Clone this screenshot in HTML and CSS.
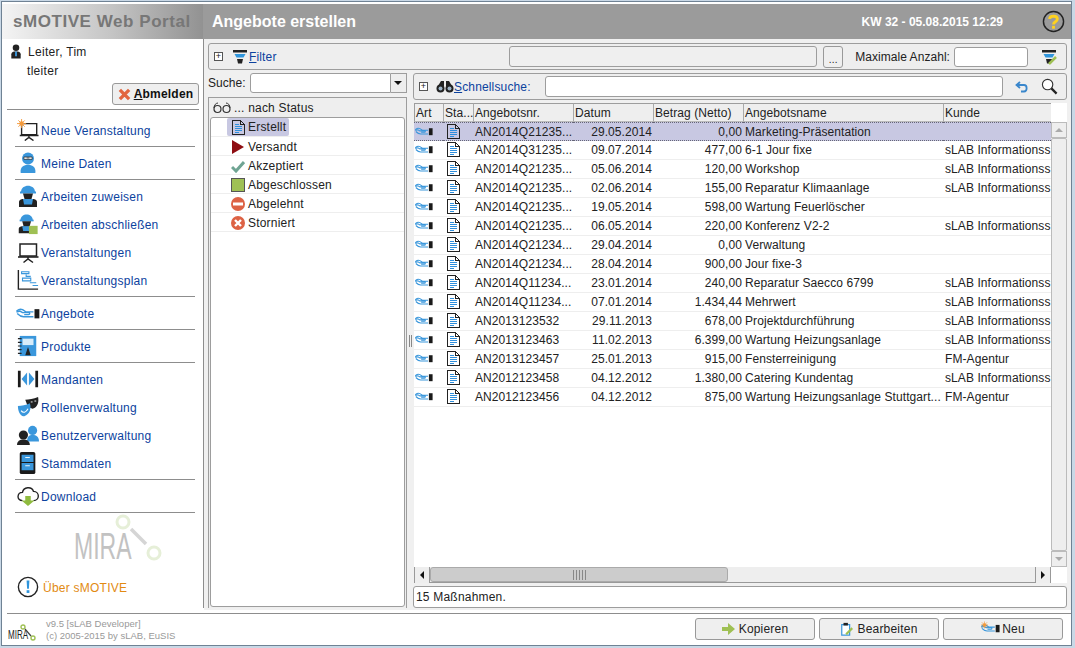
FILE: index.html
```html
<!DOCTYPE html>
<html lang="de">
<head>
<meta charset="utf-8">
<title>sMOTIVE Web Portal</title>
<link rel="stylesheet" href="styles.css">
</head>
<body>
<svg class="sprites" width="0" height="0">
  <defs>
    <symbol id="hand" viewBox="0 0 22 12">
      <path d="M16 4.500H9L6 2.500C4 1.500 2.500 2 .8 3.500L1 4.500 3.500 3.800 6 5.200H11.500C13 5.200 13 7 11.500 7H7.500M16 9H7C4.500 9 3 8 1 6" fill="none" stroke="#3a97dc" stroke-width="1.300"/>
      <rect x="17" y="2" width="4.500" height="8.500" fill="#1a1a1a"/>
    </symbol>
    <symbol id="doc" viewBox="0 0 13 15">
      <path d="M.5.5H8.500L12.500 4.500V14.500H.5Z" fill="none" stroke="#222"/>
      <path d="M8.500.5V4.500H12.500" fill="none" stroke="#222"/>
      <path d="M3 4.500H7M3 6.500H10M3 8.500H10M3 10.500H10M3 12.500H7" stroke="#2f8fdc"/>
    </symbol>
    <symbol id="board" viewBox="0 0 22 22">
      <path d="M3 3H19.500V15H3Z" fill="#fff" stroke="#222" stroke-width="1.500"/>
      <path d="M1 16H21.500" stroke="#222" stroke-width="1.600"/>
      <path d="M11 16V18M6.500 21.500 11 18 16 21.500" fill="none" stroke="#222" stroke-width="1.500"/>
    </symbol>
    <symbol id="worker" viewBox="0 0 22 24">
      <path d="M4 8C4 -.5 18 -.5 18 8Z" fill="#3a97dc"/>
      <rect x="3" y="7.500" width="16" height="2" fill="#3a97dc"/>
      <path d="M6 9.500H16L14.500 15H7.500Z" fill="#222"/>
      <path d="M2 23V18C2 15.500 5 15 7 15H15C17 15 20 15.500 20 18V23Z" fill="#222"/>
      <path d="M6 15H16L15 20.500H7Z" fill="#3a97dc"/>
    </symbol>
    <symbol id="funnel" viewBox="0 0 16 16">
      <path d="M1 1H15V3.500H1Z" fill="#222"/>
      <path d="M2.500 5H13.500L11.500 8.500H4.500Z" fill="#2f95dc"/>
      <path d="M5 10H11L10 14.500H6Z" fill="#222"/>
    </symbol>
  </defs>
</svg>

<div class="window">
  <div class="frame">
    <header class="topbar">
      <div class="brand">sMOTIVE Web Portal</div>
      <div class="titlebar">
        <h1 class="title">Angebote erstellen</h1>
        <div class="clock">KW 32 - 05.08.2015 12:29</div>
        <svg class="help" viewBox="0 0 24 24"><circle cx="12" cy="12" r="10.500" fill="none" stroke="#222" stroke-width="1.500"/><path d="M8 9.500C8 5.500 16 5.500 16 9.500 16 12.500 12 12 12 15" fill="none" stroke="#ffd21f" stroke-width="3"/><rect x="10.500" y="16.500" width="3" height="3" fill="#ffd21f"/></svg>
      </div>
    </header>

    <div class="body">
      <aside class="sidebar">
        <div class="user">
          <div class="user-line">
            <svg class="user-ic" viewBox="0 0 12 16"><circle cx="6" cy="4" r="3.500" fill="#222"/><path d="M1 15.500V11C1 8.500 3 8 6 8S11 8.500 11 11V15.500Z" fill="#222"/><path d="M5 8H7V13H5Z" fill="#3a97dc"/></svg>
            <span>Leiter, Tim</span>
          </div>
          <div class="user-login">tleiter</div>
          <div class="user-action">
            <button class="btn logout"><svg class="x-ic" viewBox="0 0 14 14"><path d="M2 2 12 12M12 2 2 12" stroke="#e2663f" stroke-width="3.600"/></svg><b><u>A</u>bmelden</b></button>
          </div>
        </div>

        <nav class="menu">
          <div class="group first">
            <a class="item"><span class="mi"><svg class="i24" viewBox="0 0 24 24"><use href="#board" x="2" y="2" width="22" height="22"/><circle cx="5" cy="5" r="2.500" fill="#f49a3c"/><path d="M5 0V10M0 5H10M1.500 1.500 8.500 8.500M8.500 1.500 1.500 8.500" stroke="#f49a3c"/></svg></span>Neue Veranstaltung</a>
          </div>
          <div class="group">
            <a class="item"><span class="mi"><svg class="i24" viewBox="0 0 24 24"><circle cx="12" cy="7" r="6.500" fill="#3a97dc"/><path d="M7.500 5.500H16.500V8H7.500ZM10.500 6.500H13.500" fill="#fff" stroke="#222" stroke-width=".8"/><path d="M4 23C3 16 8 14 12 14S21 16 20 23Z" fill="#3a97dc"/></svg></span>Meine Daten</a>
          </div>
          <div class="group">
            <a class="item"><span class="mi"><svg class="i24"><use href="#worker"/></svg></span>Arbeiten zuweisen</a>
            <a class="item"><span class="mi"><svg class="i24" viewBox="0 0 24 24"><use href="#worker" width="21" height="23"/><rect x="13" y="14" width="9.500" height="9" fill="#9fc054"/></svg></span>Arbeiten abschließen</a>
            <a class="item"><span class="mi"><svg class="i24"><use href="#board"/></svg></span>Veranstaltungen</a>
            <a class="item"><span class="mi"><svg class="i24" viewBox="0 0 24 24"><path d="M1.500 1V22H23" fill="none" stroke="#222" stroke-width="1.500"/><path d="M5 3H13V5H5ZM15 8H10V6M6 10H15V13H6ZM14 15H21M17 18H23" fill="none" stroke="#3a97dc" stroke-width="1.200"/></svg></span>Veranstaltungsplan</a>
          </div>
          <div class="group">
            <a class="item"><span class="mi"><svg class="hand-lg"><use href="#hand"/></svg></span>Angebote</a>
          </div>
          <div class="group">
            <a class="item"><span class="mi"><svg class="i24" viewBox="0 0 24 24"><path d="M3 1H21V23H3Z" fill="#3a97dc"/><path d="M6 4H18V11H6Z" fill="#d7ecfa"/><path d="M9 22 12 13 15 22Z" fill="#222"/><path d="M1 4H5M1 8H5M1 12H5M1 16H5M1 20H5" stroke="#222" stroke-width="1.200"/></svg></span>Produkte</a>
          </div>
          <div class="group">
            <a class="item"><span class="mi"><svg class="i24" viewBox="0 0 24 24"><path d="M1 3H4V21H1ZM20 3H23V21H20Z" fill="#1a1a1a"/><path d="M11 5V19L5 12ZM13 5V19L19 12Z" fill="#3a97dc"/></svg></span>Mandanten</a>
            <a class="item"><span class="mi"><svg class="i24" viewBox="0 0 24 24"><path d="M9 4C13 4 18 3 23 1 24 6 23 12 17 14L12 12Z" fill="#222"/><path d="M15 6.500H17M19 5.500H21" stroke="#fff"/><path d="M1 11C5 11 10 10 14 8 16 14 14 20 8 22 4 23 1 17 1 11Z" fill="#3a97dc"/><path d="M4.500 16C6.500 19 10 18 12 14" fill="none" stroke="#fff" stroke-width="1.200"/></svg></span>Rollenverwaltung</a>
            <a class="item"><span class="mi"><svg class="i24" viewBox="0 0 24 24"><circle cx="17" cy="7" r="5" fill="#3a97dc"/><path d="M11 19C11 14 13 12 17 12S24 14 24 19Z" fill="#3a97dc"/><circle cx="7" cy="12" r="5" fill="#222"/><path d="M0 23C0 19 3 17 7 17S14 19 14 23Z" fill="#222"/></svg></span>Benutzerverwaltung</a>
            <a class="item"><span class="mi"><svg class="i24" viewBox="0 0 24 24"><rect x="3" y="0" width="17" height="24" rx="2" fill="#1a1a1a"/><path d="M5 3H18V11H5ZM5 12H18V20H5Z" fill="#3a97dc"/><path d="M9 6H14M9 15H14" stroke="#fff"/></svg></span>Stammdaten</a>
          </div>
          <div class="group">
            <a class="item"><span class="mi"><svg class="i24" viewBox="0 0 24 24"><path d="M6 17C-1 17 0 8 6 8 7 2 16 1 18 7 25 7 25 17 18 17" fill="none" stroke="#222" stroke-width="1.500"/><path d="M9 12H15V17H19L12 23 5 17H9Z" fill="#8fbb3f"/></svg></span>Download</a>
          </div>
          <div class="group mira-group">
            <div class="mira">
              <span class="mira-text">MIRA</span>
              <svg class="mira-nodes" viewBox="0 0 50 50"><circle cx="9" cy="9" r="6" fill="none" stroke="#e6efd8" stroke-width="3"/><circle cx="40" cy="40" r="6" fill="none" stroke="#e6efd8" stroke-width="3"/><path d="M17 16 32 31" stroke="#d5d5d5" stroke-width="3.500"/></svg>
            </div>
            <a class="item about"><span class="mi"><svg class="i24" viewBox="0 0 24 24"><circle cx="12" cy="12" r="10.500" fill="none" stroke="#222" stroke-width="1.500"/><path d="M10.500 5H13.500L13 14H11Z" fill="#2f95dc"/><rect x="10.500" y="15.500" width="3" height="3" fill="#2f95dc"/></svg></span>Über sMOTIVE</a>
          </div>
        </nav>
      </aside>

      <main class="main">
        <section class="panel filter">
          <span class="expander">+</span>
          <svg class="i16"><use href="#funnel"/></svg>
          <span class="link"><u>F</u>ilter</span>
          <span class="spacer"></span>
          <div class="field wide"></div>
          <button class="btn dots">...</button>
          <span class="lbl">Maximale Anzahl:</span>
          <div class="field small"></div>
          <svg class="i16 filter-edit" viewBox="0 0 16 16"><use href="#funnel"/><path d="M8 15 15 8" stroke="#9fc054" stroke-width="2.500"/></svg>
        </section>

        <div class="split">
          <div class="left">
            <div class="search">
              <span class="lbl">Suche:</span>
              <div class="combo"><div class="combo-input"></div><div class="combo-arrow"></div></div>
            </div>
            <div class="tree-panel">
              <div class="tree-head">
                <svg class="glasses" viewBox="0 0 18 12"><circle cx="4.500" cy="7" r="3.500" fill="none" stroke="#333" stroke-width="1.200"/><circle cx="13.500" cy="7" r="3.500" fill="none" stroke="#333" stroke-width="1.200"/><path d="M1 6C1 3 3 1 5 1M13 1C15 1 17 3 17 6" fill="none" stroke="#333"/></svg>
                <span>... nach Status</span>
              </div>
              <ul class="tree">
                <li class="node"><span class="node-sel"><svg class="doc-ic"><use href="#doc"/></svg>Erstellt</span></li>
                <li class="node"><span class="node-in"><svg class="st" viewBox="0 0 14 14"><path d="M1 0 13 7 1 14Z" fill="#8e0d12"/></svg>Versandt</span></li>
                <li class="node"><span class="node-in"><svg class="st" viewBox="0 0 14 14"><path d="M1 8 5 12 13 3" fill="none" stroke="#6fa493" stroke-width="3"/></svg>Akzeptiert</span></li>
                <li class="node"><span class="node-in"><svg class="st" viewBox="0 0 14 14"><rect x=".5" y=".5" width="13" height="13" fill="#9fc054" stroke="#555"/></svg>Abgeschlossen</span></li>
                <li class="node"><span class="node-in"><svg class="st" viewBox="0 0 14 14"><circle cx="7" cy="7" r="7" fill="#dd6244"/><rect x="2" y="5.500" width="10" height="3" fill="#fff"/></svg>Abgelehnt</span></li>
                <li class="node"><span class="node-in"><svg class="st" viewBox="0 0 14 14"><circle cx="7" cy="7" r="7" fill="#dd6244"/><path d="M4 4 10 10M10 4 4 10" stroke="#fff" stroke-width="2.400"/></svg>Storniert</span></li>
              </ul>
            </div>
          </div>

          <div class="splitter"><span class="grip"></span></div>

          <div class="right">
            <section class="panel quick">
              <span class="expander">+</span>
              <svg class="binoc" viewBox="0 0 18 13"><circle cx="4.500" cy="8.500" r="4" fill="#222"/><circle cx="13.500" cy="8.500" r="4" fill="#222"/><path d="M2 6 5 1H8V6H10V1H13L16 6Z" fill="#222"/><circle cx="4.500" cy="8.500" r="2" fill="#9db4c7"/><circle cx="13.500" cy="8.500" r="2" fill="#9db4c7"/></svg>
              <span class="link"><u>S</u>chnellsuche:</span>
              <div class="field grow"></div>
              <svg class="undo" viewBox="0 0 14 14"><path d="M5 2 1.500 5 5 8M2 5H9C12.500 5 12.500 11.500 9 11.500H6" fill="none" stroke="#3a87cc" stroke-width="1.800"/></svg>
              <svg class="lens" viewBox="0 0 18 18"><circle cx="7" cy="7" r="5.500" fill="#fff" stroke="#333" stroke-width="1.200"/><path d="M11 11 16.500 16.500" stroke="#222" stroke-width="2.400"/></svg>
            </section>

            <div class="grid-box">
              <div class="grid-main">
                <table class="grid">
                  <colgroup><col class="c1"><col class="c2"><col class="c3"><col class="c4"><col class="c5"><col class="c6"><col class="c7"></colgroup>
                  <thead>
                    <tr><th>Art</th><th>Sta...</th><th>Angebotsnr.</th><th>Datum</th><th>Betrag (Netto)</th><th>Angebotsname</th><th>Kunde</th></tr>
                  </thead>
                  <tbody>
                    <tr class="sel"><td><svg class="hand"><use href="#hand"/></svg></td><td class="ctr"><svg class="doc-ic"><use href="#doc"/></svg></td><td>AN2014Q21235...</td><td class="num">29.05.2014</td><td class="num">0,00</td><td>Marketing-Präsentation</td><td></td></tr>
                    <tr><td><svg class="hand"><use href="#hand"/></svg></td><td class="ctr"><svg class="doc-ic"><use href="#doc"/></svg></td><td>AN2014Q31235...</td><td class="num">09.07.2014</td><td class="num">477,00</td><td>6-1 Jour fixe</td><td>sLAB Informationss</td></tr>
                    <tr><td><svg class="hand"><use href="#hand"/></svg></td><td class="ctr"><svg class="doc-ic"><use href="#doc"/></svg></td><td>AN2014Q21235...</td><td class="num">05.06.2014</td><td class="num">120,00</td><td>Workshop</td><td>sLAB Informationss</td></tr>
                    <tr><td><svg class="hand"><use href="#hand"/></svg></td><td class="ctr"><svg class="doc-ic"><use href="#doc"/></svg></td><td>AN2014Q21235...</td><td class="num">02.06.2014</td><td class="num">155,00</td><td>Reparatur Klimaanlage</td><td>sLAB Informationss</td></tr>
                    <tr><td><svg class="hand"><use href="#hand"/></svg></td><td class="ctr"><svg class="doc-ic"><use href="#doc"/></svg></td><td>AN2014Q21235...</td><td class="num">19.05.2014</td><td class="num">598,00</td><td>Wartung Feuerlöscher</td><td></td></tr>
                    <tr><td><svg class="hand"><use href="#hand"/></svg></td><td class="ctr"><svg class="doc-ic"><use href="#doc"/></svg></td><td>AN2014Q21235...</td><td class="num">06.05.2014</td><td class="num">220,00</td><td>Konferenz V2-2</td><td>sLAB Informationss</td></tr>
                    <tr><td><svg class="hand"><use href="#hand"/></svg></td><td class="ctr"><svg class="doc-ic"><use href="#doc"/></svg></td><td>AN2014Q21234...</td><td class="num">29.04.2014</td><td class="num">0,00</td><td>Verwaltung</td><td></td></tr>
                    <tr><td><svg class="hand"><use href="#hand"/></svg></td><td class="ctr"><svg class="doc-ic"><use href="#doc"/></svg></td><td>AN2014Q21234...</td><td class="num">28.04.2014</td><td class="num">900,00</td><td>Jour fixe-3</td><td></td></tr>
                    <tr><td><svg class="hand"><use href="#hand"/></svg></td><td class="ctr"><svg class="doc-ic"><use href="#doc"/></svg></td><td>AN2014Q11234...</td><td class="num">23.01.2014</td><td class="num">240,00</td><td>Reparatur Saecco 6799</td><td>sLAB Informationss</td></tr>
                    <tr><td><svg class="hand"><use href="#hand"/></svg></td><td class="ctr"><svg class="doc-ic"><use href="#doc"/></svg></td><td>AN2014Q11234...</td><td class="num">07.01.2014</td><td class="num">1.434,44</td><td>Mehrwert</td><td>sLAB Informationss</td></tr>
                    <tr><td><svg class="hand"><use href="#hand"/></svg></td><td class="ctr"><svg class="doc-ic"><use href="#doc"/></svg></td><td>AN2013123532</td><td class="num">29.11.2013</td><td class="num">678,00</td><td>Projektdurchführung</td><td>sLAB Informationss</td></tr>
                    <tr><td><svg class="hand"><use href="#hand"/></svg></td><td class="ctr"><svg class="doc-ic"><use href="#doc"/></svg></td><td>AN2013123463</td><td class="num">11.02.2013</td><td class="num">6.399,00</td><td>Wartung Heizungsanlage</td><td>sLAB Informationss</td></tr>
                    <tr><td><svg class="hand"><use href="#hand"/></svg></td><td class="ctr"><svg class="doc-ic"><use href="#doc"/></svg></td><td>AN2013123457</td><td class="num">25.01.2013</td><td class="num">915,00</td><td>Fensterreinigung</td><td>FM-Agentur</td></tr>
                    <tr><td><svg class="hand"><use href="#hand"/></svg></td><td class="ctr"><svg class="doc-ic"><use href="#doc"/></svg></td><td>AN2012123458</td><td class="num">04.12.2012</td><td class="num">1.380,00</td><td>Catering Kundentag</td><td>sLAB Informationss</td></tr>
                    <tr><td><svg class="hand"><use href="#hand"/></svg></td><td class="ctr"><svg class="doc-ic"><use href="#doc"/></svg></td><td>AN2012123456</td><td class="num">04.12.2012</td><td class="num">875,00</td><td>Wartung Heizungsanlage Stuttgart...</td><td>FM-Agentur</td></tr>
                  </tbody>
                </table>
                <div class="vscroll">
                  <div class="sb-btn"><span class="tri up"></span></div>
                  <div class="vtrack"></div>
                  <div class="sb-btn"><span class="tri down"></span></div>
                </div>
              </div>
              <div class="hscroll">
                <div class="sb-btn h"><span class="tri left-t"></span></div>
                <div class="hthumb"><span class="hgrip"></span></div>
                <div class="htrack"></div>
                <div class="sb-btn h"><span class="tri right-t"></span></div>
              </div>
            </div>

            <div class="status">15 Maßnahmen.</div>
          </div>
        </div>
      </main>
    </div>

    <footer class="footer">
      <div class="foot-logo">
        <span class="foot-mira">MIRA</span>
        <svg class="foot-nodes" viewBox="0 0 16 18"><circle cx="3" cy="3" r="2" fill="none" stroke="#9fc054" stroke-width="1.400"/><circle cx="13" cy="14" r="2" fill="none" stroke="#9fc054" stroke-width="1.400"/><path d="M5 5 11 12" stroke="#444" stroke-width="1.200"/></svg>
      </div>
      <div class="version">v9.5 [sLAB Developer]<br>(c) 2005-2015 by sLAB, EuSIS</div>
      <div class="actions">
        <button class="btn action"><svg class="i14" viewBox="0 0 14 14"><path d="M0 5H6V1L13 7 6 13V9H0Z" fill="#9fc054"/></svg>Kopieren</button>
        <button class="btn action"><svg class="i14" viewBox="0 0 14 16"><path d="M1 3H10V15H1Z" fill="#fff" stroke="#3a97dc" stroke-width="1.400"/><rect x="3" y="1" width="5" height="3" fill="#222"/><path d="M6 14 13 7" stroke="#9fc054" stroke-width="2.500"/></svg>Bearbeiten</button>
        <button class="btn action"><svg class="hand-new" viewBox="0 0 22 14"><use href="#hand" y="2" width="22" height="12"/><circle cx="4" cy="4" r="2" fill="#f49a3c"/><path d="M4 0V8M0 4H8M1 1 7 7M7 1 1 7" stroke="#f49a3c" stroke-width=".8"/></svg>Neu</button>
      </div>
    </footer>
  </div>
</div>
</body>
</html>
```

FILE: styles.css
```css
* { box-sizing: border-box; }
html, body { margin: 0; padding: 0; }
body {
  width: 1075px;
  height: 648px;
  overflow: hidden;
  font-family: "Liberation Sans", Arial, sans-serif;
  font-size: 12px;
  letter-spacing: .2px;
  color: #222;
  background: #c9d8e6;
}
svg { display: block; flex: none; }
.sprites { position: absolute; }

.window { width: 1075px; height: 648px; padding: 1px 3px 2px 1px; }
.frame {
  height: 100%;
  display: flex;
  flex-direction: column;
  background: #fff;
  border: 1px solid #6f8294;
  padding-top: 2px;
}

.topbar { display: flex; height: 35px; flex: none; }
.brand {
  width: 201px;
  padding-left: 11px;
  background: linear-gradient(90deg, #f4f4f4 0%, #c4c4c4 55%, #929292 100%);
  color: #777;
  font-weight: bold;
  font-size: 17px;
  line-height: 36px;
  letter-spacing: .55px;
  white-space: nowrap;
}
.titlebar {
  flex: 1;
  display: flex;
  align-items: center;
  background: #9b9b9b;
  padding-left: 9px;
  padding-right: 6px;
}
.title { margin: 0; flex: 1; color: #fff; font-size: 16px; font-weight: bold; letter-spacing: 0; }
.clock { color: #fff; font-weight: bold; font-size: 12px; letter-spacing: 0; margin-right: 39px; }
.help { width: 23px; height: 23px; }

.body { flex: 1; display: flex; min-height: 0; }

.sidebar { width: 202px; flex: none; display: flex; flex-direction: column; padding: 0 4px 0 5px; border-right: 1px solid #8d8d8d; margin-bottom: 5px; }
.user { height: 71px; border-bottom: 1px solid #8d8d8d; padding-top: 5px; }
.user-line { display: flex; align-items: center; gap: 6px; padding-left: 3px; height: 15px; letter-spacing: .3px; }
.user-ic { width: 12px; height: 15px; }
.user-login { padding-left: 20px; margin-top: 5px; line-height: 15px; letter-spacing: .3px; }
.user-action { display: flex; justify-content: flex-end; margin-top: 4px; }

.btn {
  font: inherit;
  letter-spacing: inherit;
  color: #222;
  background: #efefef;
  border: 1px solid #999;
  border-radius: 3px;
  padding: 0;
  display: flex;
  align-items: center;
  justify-content: center;
}
.logout { width: 87px; height: 22px; gap: 3px; color: #111; }
.x-ic { width: 13px; height: 13px; }

.group { padding: 2px 0; border-top: 1px solid #8d8d8d; margin: 0 4px 0 8px; }
.group.first { border-top: 0; padding-top: 6px; }
.menu { display: flex; flex-direction: column; flex: 1; }
.item {
  display: flex;
  align-items: center;
  height: 28px;
  padding-top: 1px;
  color: #0c429e;
  letter-spacing: .24px;
}
.mi { width: 26px; flex: none; display: flex; align-items: center; justify-content: center; margin-top: -1px; }
.i24 { width: 22px; height: 24px; }
.hand-lg { width: 24px; height: 13px; }

.mira-group { flex: 1; display: flex; flex-direction: column; }
.mira { position: relative; height: 58px; }
.mira-text {
  position: absolute; left: 59px; top: 12px;
  font-size: 36px; line-height: 40px; color: #c2c2c2; letter-spacing: 0;
  transform: scaleX(.64);
  transform-origin: left center;
}
.mira-nodes { position: absolute; left: 99px; top: -2px; width: 50px; height: 50px; }
.about { color: #e28a12; }
.about .mi { margin-right: 2px; }

.main { flex: 1; background: #f0f0f0; padding: 4px 4px 2px; display: flex; flex-direction: column; min-width: 0; margin-bottom: 3px; }
.panel {
  display: flex;
  align-items: center;
  background: #eee;
  border: 1px solid #9d9d9d;
  border-radius: 3px;
}
.filter { height: 27px; flex: none; padding: 0 9px 0 5px; }
.expander {
  width: 9px; height: 9px; border: 1px solid #555; background: #fff;
  font-size: 9px; line-height: 6px; text-align: center; letter-spacing: 0; flex: none; margin-right: 9px;
}
.i16 { width: 16px; height: 16px; margin-right: 1px; }
.link { color: #0c429e; letter-spacing: .15px; }
.spacer { flex: 1; }
.field { background: #fff; border: 1px solid #9d9d9d; border-radius: 3px; height: 21px; }
.field.wide { width: 308px; background: #efefef; }
.dots { width: 20px; height: 22px; margin-left: 6px; margin-right: 12px; font-size: 10px; padding-top: 5px; }
.lbl { white-space: nowrap; letter-spacing: .05px; }
.field.small { width: 74px; height: 20px; margin-left: 4px; margin-right: 13px; }
.filter-edit { margin-right: 0; }

.split { flex: 1; display: flex; min-height: 0; margin-top: 3px; }
.left { width: 199px; flex: none; display: flex; flex-direction: column; }
.search { display: flex; align-items: center; gap: 4px; height: 20px; }
.combo { flex: 1; display: flex; height: 20px; }
.combo-input { flex: 1; background: #fff; border: 1px solid #9d9d9d; border-radius: 3px 0 0 3px; }
.combo-arrow {
  width: 16px; background: #eee; border: 1px solid #9d9d9d; border-left: 0; position: relative;
}
.combo-arrow::after {
  content: ""; position: absolute; left: 3px; top: 7px;
  border: 4px solid transparent; border-top: 4px solid #111; border-bottom: 0;
}
.tree-panel { flex: 1; margin-top: 4px; background: #eee; border: 1px solid #9d9d9d; border-bottom: 0; display: flex; flex-direction: column; min-height: 0; padding: 0 1px 1px 1px; }
.tree-head { height: 19px; display: flex; align-items: center; gap: 3px; padding-left: 3px; flex: none; }
.glasses { width: 18px; height: 12px; }
.tree { flex: 1; list-style: none; margin: 0; padding: 0; background: #fff; border: 1px solid #9d9d9d; border-radius: 3px; }
.node { height: 19px; border-bottom: 1px solid #eee; padding-left: 16px; display: flex; align-items: center; }
.node-sel { display: flex; align-items: center; gap: 3px; height: 18px; padding: 0 3px 0 5px; background: #c8c8e2; border-radius: 2px; }
.node-in { display: flex; align-items: center; gap: 3px; padding-left: 4px; padding-top: 1px; }
.doc-ic { width: 13px; height: 15px; shape-rendering: crispEdges; }
.st { width: 14px; height: 14px; }

.splitter { width: 6px; flex: none; display: flex; align-items: center; justify-content: center; }
.grip { width: 3px; height: 12px; border-left: 1px solid #888; border-right: 1px solid #888; }

.right { flex: 1; display: flex; flex-direction: column; min-width: 0; }
.quick { height: 27px; flex: none; padding: 0 8px 0 5px; }
.quick .expander { margin-right: 8px; }
.binoc { width: 18px; height: 13px; }
.field.grow { flex: 1; margin-left: 14px; }
.undo { width: 14px; height: 14px; margin-left: 12px; }
.lens { width: 17px; height: 17px; margin-left: 12px; }

.grid-box { margin-top: 3px; margin-left: 1px; flex: 1; display: flex; flex-direction: column; min-height: 0; background: #fff; }
.grid-main { flex: 1; display: flex; min-height: 0; align-items: stretch; }
.grid { width: 637px; table-layout: fixed; border-collapse: separate; border-spacing: 0; align-self: flex-start; letter-spacing: .08px; }
.c1 { width: 29px; } .c2 { width: 30px; } .c3 { width: 100px; } .c4 { width: 80px; } .c5 { width: 90px; } .c6 { width: 200px; } .c7 { width: 108px; }
.grid th {
  height: 19px; padding: 0 0 0 1px; text-align: left; font-weight: normal; background: #eee;
  border-top: 1px solid #9d9d9d; border-left: 1px solid #aaa; border-bottom: 1px solid #bbb;
  overflow: hidden; white-space: nowrap;
}
.grid th:first-child { border-left: 1px solid #9d9d9d; }
.grid td {
  height: 19px; padding: 0 1px 0 2px; border-bottom: 1px solid #eee; overflow: hidden; white-space: nowrap;
}
.grid .num { text-align: right; }
.grid .ctr .doc-ic { margin: 0 0 1px 2px; }
.hand { width: 18px; height: 11px; margin: 0 0 1px -1px; }
.grid tr.sel td { background: #c8c8e2; border-top: 1px dotted #667; border-bottom: 1px dotted #667; height: 19px; }

.vscroll { width: 16px; flex: none; margin-top: 19px; display: flex; flex-direction: column; background: #eee; }
.vtrack { flex: 1; background: #eee; border: 1px solid #bbb; border-radius: 2px; }
.sb-btn { height: 16px; width: 16px; flex: none; background: #eee; border: 1px solid #bbb; display: flex; align-items: center; justify-content: center; }
.tri { width: 0; height: 0; border: 4px solid transparent; }
.tri.up { border-top: 0; border-bottom: 4px solid #aaa; }
.tri.down { border-bottom: 0; border-top: 4px solid #aaa; }
.tri.left-t { border-left: 0; border-right: 4px solid #111; }
.tri.right-t { border-right: 0; border-left: 4px solid #111; }

.hscroll { height: 16px; flex: none; width: 637px; display: flex; background: #eee; border-bottom: 1px solid #999; }
.sb-btn.h { border: 1px solid #999; border-top: 0; border-bottom: 0; }
.hthumb { width: 298px; background: #ccc; border: 1px solid #aaa; border-radius: 3px; display: flex; align-items: center; justify-content: center; }
.hgrip { width: 13px; height: 10px; background: repeating-linear-gradient(90deg, #888 0 1px, transparent 1px 3px); }
.htrack { flex: 1; }

.status { height: 22px; margin-top: 3px; background: #fff; border: 1px solid #9d9d9d; border-radius: 3px; padding-left: 2px; line-height: 21px; flex: none; }

.footer { height: 32px; flex: none; margin-left: 5px; border-top: 1px solid #8d8d8d; display: flex; align-items: flex-start; position: relative; }
.foot-logo { width: 38px; height: 30px; position: relative; flex: none; }
.foot-mira { position: absolute; left: 1px; top: 14px; font-size: 13px; line-height: 14px; letter-spacing: 0; color: #222; transform: scaleX(.62); transform-origin: left center; }
.foot-nodes { position: absolute; left: 13px; top: 10px; width: 16px; height: 18px; }
.version { color: #999; font-size: 9.500px; line-height: 12px; padding-top: 4px; padding-left: 1px; flex: 1; letter-spacing: 0; }
.actions { display: flex; gap: 4px; padding: 4px 8px 0 0; }
.action { width: 120px; height: 22px; gap: 3px; }
.i14 { width: 14px; height: 14px; }
.hand-new { width: 19px; height: 13px; margin-right: -1px; margin-top: -3px; }
```
